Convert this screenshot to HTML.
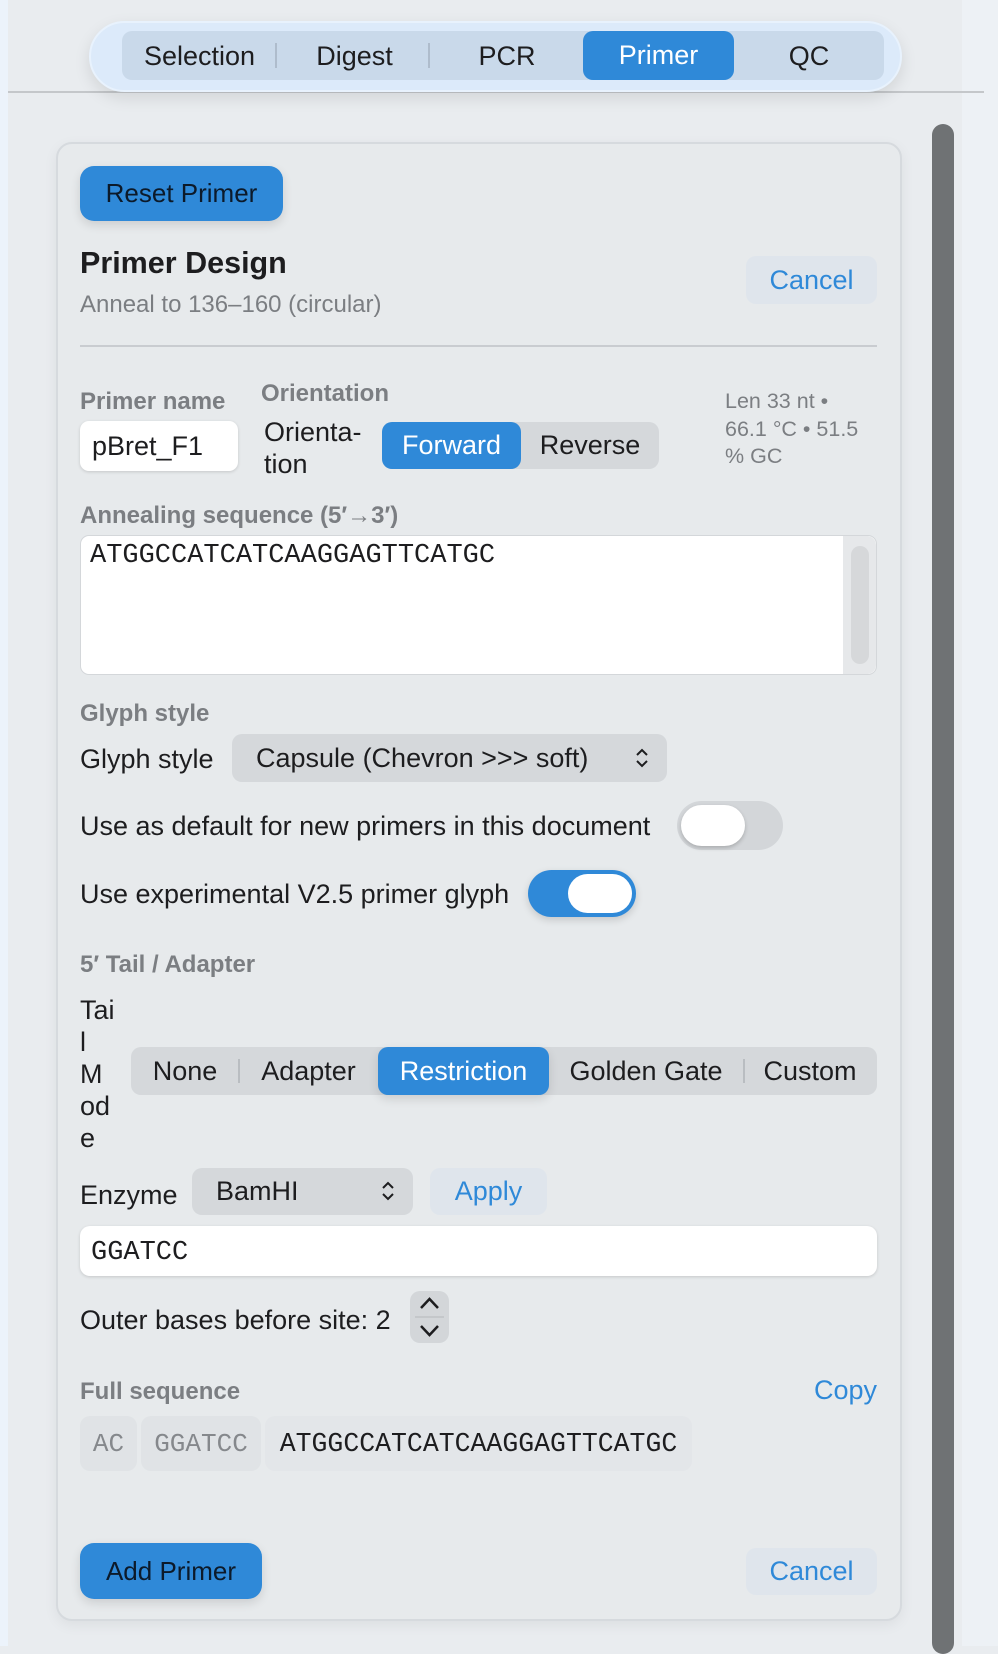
<!DOCTYPE html>
<html><head><meta charset="utf-8"><style>
*{box-sizing:border-box;margin:0;padding:0}
body{width:998px;height:1646px;overflow:hidden;background:#e9ecef;font-family:"Liberation Sans",sans-serif;color:#1d1d1f;position:relative}
.a{position:absolute}
.lbl{font-size:24px;font-weight:bold;color:#7b7e82}
.t{font-size:27px;color:#1d1d1f}
.mono{font-family:"Liberation Mono",monospace}
.btn{background:#2f89d8;border-radius:14px;color:#0c1a2a;font-size:26px;display:flex;align-items:center;justify-content:center;box-shadow:0 4px 10px rgba(0,0,0,.12)}
.ghost{background:#dfe5ec;border-radius:10px;color:#2f89d8;font-size:27px;display:flex;align-items:center;justify-content:center}
.seg{background:#d5d8db;border-radius:10px}
.lab{position:absolute;top:0;bottom:0;display:flex;align-items:center;justify-content:center;font-size:27px}
.on{background:#2f89d8;color:#fff;border-radius:10px}
.div{position:absolute;width:2px;background:#b9bdc1;top:12px;bottom:12px}
</style></head><body>
<div class="a" style="left:0;top:0;width:8px;height:1646px;background:#ecf3fb"></div>
<div class="a" style="left:962px;top:0;width:36px;height:1646px;background:#edf1f5"></div>
<div class="a" style="left:8px;top:91px;width:976px;height:2px;background:#c4c7ca"></div>
<div class="a" style="left:89px;top:21px;width:813px;height:71px;border-radius:36px;background:#dceafa;border:2px solid #e8f2fd;box-shadow:0 6px 16px rgba(0,0,0,.1)"></div>
<div class="a" style="left:122px;top:31px;width:762px;height:49px;border-radius:10px;background:#c9d9ea">
 <div class="lab" style="left:0;width:155px;top:2px">Selection</div>
 <div class="div" style="left:153px;background:#aebccc"></div>
 <div class="lab" style="left:155px;width:155px;top:2px">Digest</div>
 <div class="div" style="left:306px;background:#aebccc"></div>
 <div class="lab" style="left:310px;width:150px;top:2px">PCR</div>
 <div class="lab on" style="left:461px;width:151px">Primer</div>
 <div class="lab" style="left:612px;width:150px;top:2px">QC</div>
</div>
<div class="a" style="left:932px;top:124px;width:22px;height:1530px;border-radius:11px;background:#6f7274"></div>
<div class="a" style="left:56px;top:142px;width:846px;height:1479px;border-radius:16px;background:#e7eaec;border:2px solid #d6dade;box-shadow:0 4px 14px rgba(0,0,0,.06)"></div>

<div class="a btn" style="left:80px;top:166px;width:203px;height:55px">Reset Primer</div>
<div class="a" style="left:80px;top:246px;font-size:30.5px;font-weight:bold">Primer Design</div>
<div class="a" style="left:80px;top:291px;font-size:24px;color:#7b7e82">Anneal to 136–160 (circular)</div>
<div class="a ghost" style="left:746px;top:256px;width:131px;height:48px">Cancel</div>
<div class="a" style="left:80px;top:345px;width:797px;height:2px;background:#c9ccd0"></div>

<div class="a lbl" style="left:80px;top:388px">Primer name</div>
<div class="a" style="left:80px;top:421px;width:158px;height:50px;background:#fff;border-radius:9px;box-shadow:0 1px 3px rgba(0,0,0,.15);font-size:27px;padding:10px 12px">pBret_F1</div>
<div class="a lbl" style="left:261px;top:380px">Orientation</div>
<div class="a t" style="left:264px;top:416px;line-height:32px">Orienta-<br>tion</div>
<div class="a seg" style="left:382px;top:422px;width:277px;height:47px">
 <div class="lab on" style="left:0;width:139px">Forward</div>
 <div class="lab" style="left:139px;width:138px">Reverse</div>
</div>
<div class="a" style="left:725px;top:388px;font-size:21.5px;color:#7b7e82;line-height:27.5px">Len 33 nt •<br>66.1 °C • 51.5<br>% GC</div>

<div class="a lbl" style="left:80px;top:502px">Annealing sequence (5′→3′)</div>
<div class="a" style="left:80px;top:535px;width:797px;height:140px;background:#fff;border-radius:9px;border:1px solid #d4d7da">
 <div class="a mono" style="left:9px;top:5px;font-size:27px">ATGGCCATCATCAAGGAGTTCATGC</div>
 <div class="a" style="right:0;top:0;width:33px;height:138px;background:#e6e8ea;border-radius:0 9px 9px 0"></div>
 <div class="a" style="right:7px;top:10px;width:18px;height:118px;background:#d6d8da;border-radius:9px"></div>
</div>

<div class="a lbl" style="left:80px;top:700px">Glyph style</div>
<div class="a t" style="left:80px;top:744px">Glyph style</div>
<div class="a seg" style="left:232px;top:734px;width:435px;height:48px;display:flex;align-items:center;padding-left:24px;font-size:27px">Capsule (Chevron &gt;&gt;&gt; soft)
 <svg class="a" style="right:18px;top:14px" width="14" height="20" viewBox="0 0 14 20"><path d="M2 7 L7 2 L12 7 M2 13 L7 18 L12 13" fill="none" stroke="#1d1d1f" stroke-width="2"/></svg></div>

<div class="a t" style="left:80px;top:811px">Use as default for new primers in this document</div>
<div class="a" style="left:677px;top:801px;width:106px;height:49px;border-radius:25px;background:#d3d6d9"><div class="a" style="left:4px;top:4px;width:64px;height:41px;border-radius:21px;background:#fff;box-shadow:0 2px 4px rgba(0,0,0,.2)"></div></div>
<div class="a t" style="left:80px;top:879px">Use experimental V2.5 primer glyph</div>
<div class="a" style="left:528px;top:870px;width:108px;height:47px;border-radius:24px;background:#2f89d8;box-shadow:0 3px 8px rgba(0,0,0,.15)"><div class="a" style="left:40px;top:4px;width:64px;height:39px;border-radius:20px;background:#fff"></div></div>

<div class="a lbl" style="left:80px;top:951px">5′ Tail / Adapter</div>
<div class="a t" style="left:80px;top:994px;line-height:32px">Tai<br>l<br>M<br>od<br>e</div>
<div class="a seg" style="left:131px;top:1047px;width:746px;height:48px">
 <div class="lab" style="left:0;width:108px">None</div>
 <div class="div" style="left:107px"></div>
 <div class="lab" style="left:108px;width:139px">Adapter</div>
 <div class="lab on" style="left:247px;width:171px;box-shadow:0 4px 10px rgba(0,0,0,.12)">Restriction</div>
 <div class="lab" style="left:418px;width:194px">Golden Gate</div>
 <div class="div" style="left:612px"></div>
 <div class="lab" style="left:612px;width:134px">Custom</div>
</div>

<div class="a t" style="left:80px;top:1180px">Enzyme</div>
<div class="a seg" style="left:192px;top:1168px;width:221px;height:47px;display:flex;align-items:center;padding-left:24px;font-size:27px">BamHI
 <svg class="a" style="right:18px;top:13px" width="14" height="20" viewBox="0 0 14 20"><path d="M2 7 L7 2 L12 7 M2 13 L7 18 L12 13" fill="none" stroke="#1d1d1f" stroke-width="2"/></svg></div>
<div class="a ghost" style="left:430px;top:1168px;width:117px;height:47px">Apply</div>
<div class="a" style="left:80px;top:1226px;width:797px;height:50px;background:#fff;border-radius:10px;box-shadow:0 1px 3px rgba(0,0,0,.15);padding:9px 11px;font-size:27px"><span class="mono">GGATCC</span></div>

<div class="a t" style="left:80px;top:1305px">Outer bases before site: 2</div>
<div class="a" style="left:410px;top:1291px;width:39px;height:52px;border-radius:10px;background:#d3d6d9">
 <svg width="39" height="52" viewBox="0 0 39 52"><path d="M11 17 L19.5 8 L28 17 M11 35 L19.5 44 L28 35" fill="none" stroke="#1d1d1f" stroke-width="2.5"/><path d="M5 26 H34" stroke="#bfc2c5" stroke-width="1.5"/></svg></div>

<div class="a lbl" style="left:80px;top:1378px">Full sequence</div>
<div class="a" style="right:121px;top:1375px;font-size:27px;color:#2f89d8">Copy</div>
<div class="a mono" style="left:80px;top:1416px;width:57px;height:55px;border-radius:10px;background:#e0e3e6;color:#85888c;font-size:26px;display:flex;align-items:center;justify-content:center">AC</div>
<div class="a mono" style="left:141px;top:1416px;width:120px;height:55px;border-radius:10px;background:#e0e3e6;color:#85888c;font-size:26px;display:flex;align-items:center;justify-content:center">GGATCC</div>
<div class="a mono" style="left:265px;top:1416px;width:427px;height:55px;border-radius:10px;background:#e3e6e9;font-size:26.5px;display:flex;align-items:center;justify-content:center">ATGGCCATCATCAAGGAGTTCATGC</div>

<div class="a btn" style="left:80px;top:1543px;width:182px;height:56px">Add Primer</div>
<div class="a ghost" style="left:746px;top:1548px;width:131px;height:47px">Cancel</div>
</body></html>
